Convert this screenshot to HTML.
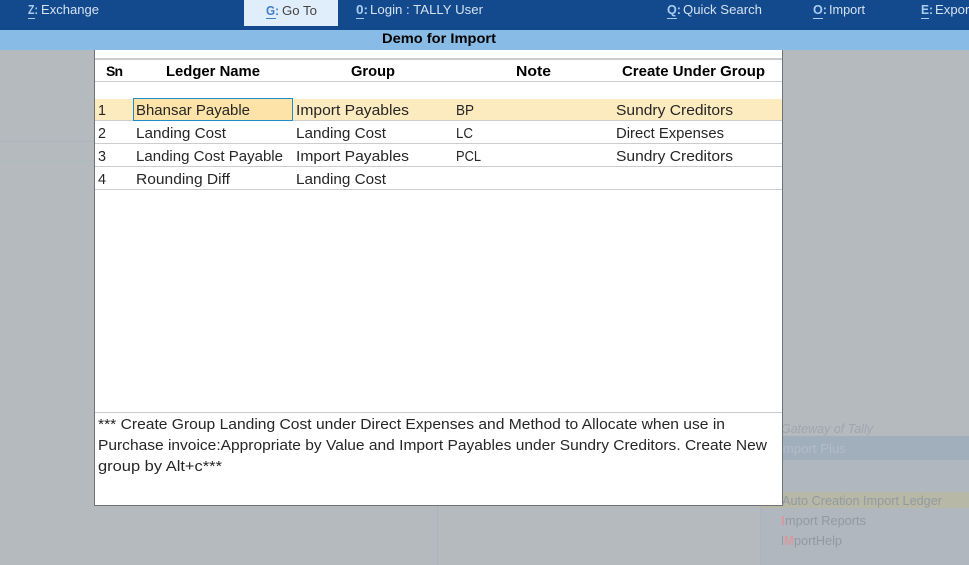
<!DOCTYPE html>
<html><head><meta charset="utf-8"><title>Demo for Import</title>
<style>
html,body{margin:0;padding:0;width:969px;height:565px;overflow:hidden;background:#b5babe}
svg{display:block}
text{font-family:"Liberation Sans",sans-serif;font-size:15px;fill:#262626;white-space:pre}
.b{font-weight:bold;font-size:15px;fill:#000}
.m{font-size:13px;fill:#d5e2f0}
.k{font-size:13px;fill:#a9cdf0;font-weight:bold}
.g{font-size:12.5px;fill:#9399a3}
</style></head><body>
<svg width="969" height="565" viewBox="0 0 969 565" xmlns="http://www.w3.org/2000/svg">
<rect width="969" height="565" fill="#b5babe"/>
<rect x="0" y="141" width="94" height="1" fill="#aab5bd"/>
<rect x="0" y="160" width="94" height="1" fill="#afbabc"/>
<rect x="437" y="506" width="1" height="59" fill="#adb3b8"/>
<rect x="760" y="460" width="209" height="105" fill="#b0b7bf"/>
<rect x="760" y="506" width="1" height="59" fill="#aab4bd"/>
<rect x="760" y="436" width="209" height="24" fill="#a1aebb"/>
<rect x="760" y="492" width="209" height="16" fill="#b7b9a6"/>

<text class="g" x="781" y="433" textLength="92" lengthAdjust="spacingAndGlyphs" style="font-style:italic;fill:#a0a6ac">Gateway of Tally</text>
<text class="g" x="779" y="453" textLength="67" lengthAdjust="spacingAndGlyphs" style="fill:#b4bcc6">Import Plus</text>

<rect width="969" height="30" fill="#134a8e"/>
<rect y="30" width="969" height="20" fill="#88bbe6"/>
<rect x="244" y="0" width="94" height="26" fill="#e0edfa"/>

<text class="k" x="28" y="14" textLength="10" lengthAdjust="spacingAndGlyphs">Z:</text><rect x="28" y="18" width="7" height="1" fill="#a9cdf0"/>
<text class="m" x="41" y="14" textLength="58" lengthAdjust="spacingAndGlyphs">Exchange</text>
<text class="k" x="266" y="15" textLength="13" lengthAdjust="spacingAndGlyphs" style="fill:#3f7fc8">G:</text><rect x="266" y="18" width="10" height="1" fill="#3f7fc8"/>
<text class="m" x="282" y="15" textLength="35" lengthAdjust="spacingAndGlyphs" style="fill:#444">Go To</text>
<text class="k" x="356" y="14" textLength="12" lengthAdjust="spacingAndGlyphs">0:</text><rect x="356" y="18" width="8" height="1" fill="#a9cdf0"/>
<text class="m" x="370" y="14" textLength="113" lengthAdjust="spacingAndGlyphs">Login : TALLY User</text>
<text class="k" x="667" y="14" textLength="14" lengthAdjust="spacingAndGlyphs">Q:</text><rect x="667" y="18" width="10" height="1" fill="#a9cdf0"/>
<text class="m" x="683" y="14" textLength="79" lengthAdjust="spacingAndGlyphs">Quick Search</text>
<text class="k" x="813" y="14" textLength="14" lengthAdjust="spacingAndGlyphs">O:</text><rect x="813" y="18" width="10" height="1" fill="#a9cdf0"/>
<text class="m" x="829" y="14" textLength="36" lengthAdjust="spacingAndGlyphs">Import</text>
<text class="k" x="921" y="14" textLength="12" lengthAdjust="spacingAndGlyphs">E:</text><rect x="921" y="18" width="8" height="1" fill="#a9cdf0"/>
<text class="m" x="935" y="14" textLength="38" lengthAdjust="spacingAndGlyphs">Export</text>

<text class="b" x="382" y="43" textLength="114" lengthAdjust="spacingAndGlyphs" style="font-size:13.5px">Demo for Import</text>

<rect x="94" y="50" width="689" height="456" fill="#6f7275"/>
<rect x="95" y="50" width="687" height="455" fill="#fff"/>
<rect x="95" y="58" width="687" height="2" fill="#ccc"/>
<rect x="95" y="81" width="687" height="1" fill="#ccc"/>
<rect x="95" y="99" width="687" height="21" fill="#fdebc0"/>
<rect x="95" y="120" width="687" height="1" fill="#ccc"/>
<rect x="95" y="143" width="687" height="1" fill="#ccc"/>
<rect x="95" y="166" width="687" height="1" fill="#ccc"/>
<rect x="95" y="189" width="687" height="1" fill="#ccc"/>
<rect x="95" y="412" width="687" height="1" fill="#ccc"/>
<rect x="133.500" y="98.500" width="159" height="22" fill="#fde3a8" stroke="#1e8cc8"/>

<text class="b" x="106" y="76" textLength="17" style="font-size:14px">Sn</text>
<text class="b" x="166" y="76" textLength="94" lengthAdjust="spacingAndGlyphs">Ledger Name</text>
<text class="b" x="351" y="76" textLength="44" lengthAdjust="spacingAndGlyphs">Group</text>
<text class="b" x="516" y="76" textLength="35" lengthAdjust="spacingAndGlyphs">Note</text>
<text class="b" x="622" y="76" textLength="143" lengthAdjust="spacingAndGlyphs">Create Under Group</text>

<text x="98" y="115" textLength="8" lengthAdjust="spacingAndGlyphs">1</text>
<text x="136" y="115" textLength="114" lengthAdjust="spacingAndGlyphs">Bhansar Payable</text>
<text x="296" y="115" textLength="113" lengthAdjust="spacingAndGlyphs">Import Payables</text>
<text x="456" y="115" textLength="18" lengthAdjust="spacingAndGlyphs">BP</text>
<text x="616" y="115" textLength="117" lengthAdjust="spacingAndGlyphs">Sundry Creditors</text>

<text x="98" y="138" textLength="8" lengthAdjust="spacingAndGlyphs">2</text>
<text x="136" y="138" textLength="90" lengthAdjust="spacingAndGlyphs">Landing Cost</text>
<text x="296" y="138" textLength="90" lengthAdjust="spacingAndGlyphs">Landing Cost</text>
<text x="456" y="138" textLength="17" lengthAdjust="spacingAndGlyphs">LC</text>
<text x="616" y="138" textLength="108" lengthAdjust="spacingAndGlyphs">Direct Expenses</text>

<text x="98" y="161" textLength="8" lengthAdjust="spacingAndGlyphs">3</text>
<text x="136" y="161" textLength="147" lengthAdjust="spacingAndGlyphs">Landing Cost Payable</text>
<text x="296" y="161" textLength="113" lengthAdjust="spacingAndGlyphs">Import Payables</text>
<text x="456" y="161" textLength="25" lengthAdjust="spacingAndGlyphs">PCL</text>
<text x="616" y="161" textLength="117" lengthAdjust="spacingAndGlyphs">Sundry Creditors</text>

<text x="98" y="184" textLength="8" lengthAdjust="spacingAndGlyphs">4</text>
<text x="136" y="184" textLength="94" lengthAdjust="spacingAndGlyphs">Rounding Diff</text>
<text x="296" y="184" textLength="90" lengthAdjust="spacingAndGlyphs">Landing Cost</text>

<text x="98" y="429" textLength="627" lengthAdjust="spacingAndGlyphs">*** Create Group Landing Cost under Direct Expenses and Method to Allocate when use in</text>
<text x="98" y="450" textLength="669" lengthAdjust="spacingAndGlyphs">Purchase invoice:Appropriate by Value and Import Payables under Sundry Creditors. Create New</text>
<text x="98" y="471" textLength="124" lengthAdjust="spacingAndGlyphs">group by Alt+c***</text>

<text class="g" x="782" y="505" textLength="160" lengthAdjust="spacingAndGlyphs">Auto Creation Import Ledger</text>
<text class="g" x="781" y="525" textLength="4" lengthAdjust="spacingAndGlyphs" style="fill:#d89aa0;font-weight:bold">I</text>
<text class="g" x="785" y="525" textLength="81" lengthAdjust="spacingAndGlyphs">mport Reports</text>
<text class="g" x="781" y="545" textLength="3" lengthAdjust="spacingAndGlyphs">I</text>
<text class="g" x="784" y="545" textLength="10" lengthAdjust="spacingAndGlyphs" style="fill:#d89aa0;font-weight:bold">M</text>
<text class="g" x="794" y="545" textLength="48" lengthAdjust="spacingAndGlyphs">portHelp</text>
</svg>
</body></html>
